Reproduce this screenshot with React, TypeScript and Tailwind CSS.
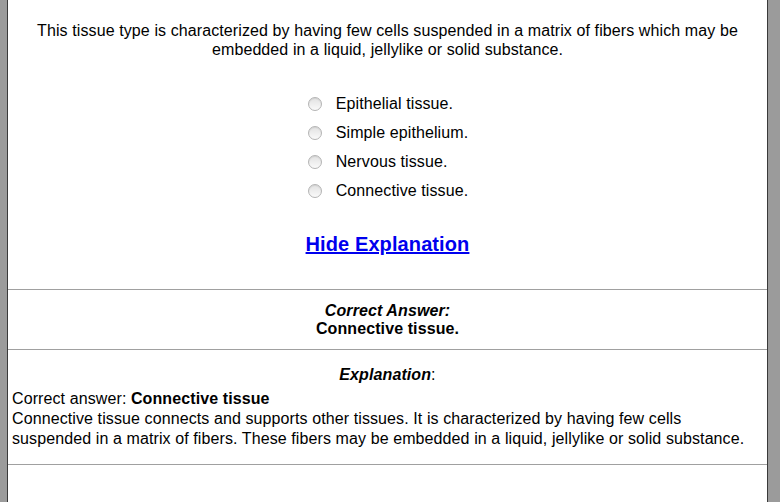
const options = ['Epithelial tissue.', 'Simple epithelium.', 'Nervous tissue.', 'Connective tissue.'];

function Radio() {
  return (
    <span className="inline-block w-[14px] h-[14px] rounded-full border border-[#b4b4b4] bg-gradient-to-b from-[#e2e2e2] to-[#fafafa] shadow-[inset_0_1px_1px_rgba(0,0,0,0.08)]" />
  );
}

export default function App() {
  return (
    <div className="flex w-[780px] h-[502px] overflow-hidden bg-white text-black tracking-[0.1px] font-['Liberation_Sans',Arial,sans-serif]">
      <div className="w-[8px] shrink-0 bg-[#9b9b9b] border-r border-[#3a3a3a]" />
      <div className="flex-1 flex flex-col">
        <div className="pt-[21px] pb-[33px] flex flex-col items-center">
          <p className="text-[16px] leading-[19px] text-center px-4">
            This tissue type is characterized by having few cells suspended in a matrix of fibers which may be
            <br />
            embedded in a liquid, jellylike or solid substance.
          </p>
          <div className="mt-[30px] flex flex-col">
            {options.map((o) => (
              <label key={o} className="flex items-center h-[29px] text-[16px] ml-[1px]">
                <Radio />
                <span className="ml-[14px]">{o}</span>
              </label>
            ))}
          </div>
          <a href="#" className="mt-[28px] text-[20px] leading-[23px] font-bold text-[#0000ee] underline">
            Hide Explanation
          </a>
        </div>
        <div className="h-px bg-[#a0a0a0]" />
        <div className="pt-[12px] pb-[11px] text-center text-[16px] leading-[18px] font-bold">
          <div className="italic">Correct Answer:</div>
          <div>Connective tissue.</div>
        </div>
        <div className="h-px bg-[#a0a0a0]" />
        <div className="pt-[16px] pb-[15px] text-[16px]">
          <div className="text-center leading-[18px]">
            <span className="italic font-bold">Explanation</span>:
          </div>
          <div className="mt-[5px] pl-[4px] leading-[20px]">
            Correct answer: <b>Connective tissue</b>
            <br />
            Connective tissue connects and supports other tissues. It is characterized by having few cells
            <br />
            suspended in a matrix of fibers. These fibers may be embedded in a liquid, jellylike or solid substance.
          </div>
        </div>
        <div className="h-px bg-[#a0a0a0]" />
      </div>
      <div className="w-[13px] shrink-0 bg-[#9b9b9b] border-l border-[#3a3a3a]" />
    </div>
  );
}
